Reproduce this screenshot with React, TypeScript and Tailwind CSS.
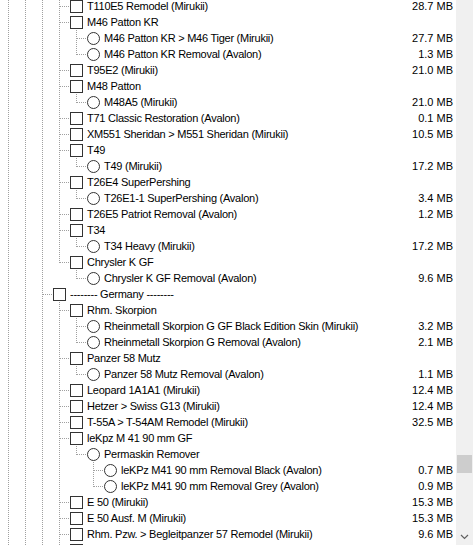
import React from "react";

type Row = { level: number; kind: "check" | "radio"; label: string; size?: string };

const rows: Row[] = [
  { level: 4, kind: "check", label: "T110E5 Remodel (Mirukii)", size: "28.7 MB" },
  { level: 4, kind: "check", label: "M46 Patton KR" },
  { level: 5, kind: "radio", label: "M46 Patton KR > M46 Tiger (Mirukii)", size: "27.7 MB" },
  { level: 5, kind: "radio", label: "M46 Patton KR Removal (Avalon)", size: "1.3 MB" },
  { level: 4, kind: "check", label: "T95E2 (Mirukii)", size: "21.0 MB" },
  { level: 4, kind: "check", label: "M48 Patton" },
  { level: 5, kind: "radio", label: "M48A5 (Mirukii)", size: "21.0 MB" },
  { level: 4, kind: "check", label: "T71 Classic Restoration (Avalon)", size: "0.1 MB" },
  { level: 4, kind: "check", label: "XM551 Sheridan > M551 Sheridan (Mirukii)", size: "10.5 MB" },
  { level: 4, kind: "check", label: "T49" },
  { level: 5, kind: "radio", label: "T49 (Mirukii)", size: "17.2 MB" },
  { level: 4, kind: "check", label: "T26E4 SuperPershing" },
  { level: 5, kind: "radio", label: "T26E1-1 SuperPershing (Avalon)", size: "3.4 MB" },
  { level: 4, kind: "check", label: "T26E5 Patriot Removal (Avalon)", size: "1.2 MB" },
  { level: 4, kind: "check", label: "T34" },
  { level: 5, kind: "radio", label: "T34 Heavy (Mirukii)", size: "17.2 MB" },
  { level: 4, kind: "check", label: "Chrysler K GF" },
  { level: 5, kind: "radio", label: "Chrysler K GF Removal (Avalon)", size: "9.6 MB" },
  { level: 3, kind: "check", label: "-------- Germany --------" },
  { level: 4, kind: "check", label: "Rhm. Skorpion" },
  { level: 5, kind: "radio", label: "Rheinmetall Skorpion G GF Black Edition Skin (Mirukii)", size: "3.2 MB" },
  { level: 5, kind: "radio", label: "Rheinmetall Skorpion G Removal (Avalon)", size: "2.1 MB" },
  { level: 4, kind: "check", label: "Panzer 58 Mutz" },
  { level: 5, kind: "radio", label: "Panzer 58 Mutz Removal (Avalon)", size: "1.1 MB" },
  { level: 4, kind: "check", label: "Leopard 1A1A1 (Mirukii)", size: "12.4 MB" },
  { level: 4, kind: "check", label: "Hetzer > Swiss G13 (Mirukii)", size: "12.4 MB" },
  { level: 4, kind: "check", label: "T-55A > T-54AM Remodel (Mirukii)", size: "32.5 MB" },
  { level: 4, kind: "check", label: "leKpz M 41 90 mm GF" },
  { level: 5, kind: "radio", label: "Permaskin Remover" },
  { level: 6, kind: "radio", label: "leKPz M41 90 mm Removal Black (Avalon)", size: "0.7 MB" },
  { level: 6, kind: "radio", label: "leKPz M41 90 mm Removal Grey (Avalon)", size: "0.9 MB" },
  { level: 4, kind: "check", label: "E 50 (Mirukii)", size: "15.3 MB" },
  { level: 4, kind: "check", label: "E 50 Ausf. M (Mirukii)", size: "15.3 MB" },
  { level: 4, kind: "check", label: "Rhm. Pzw. > Begleitpanzer 57 Remodel (Mirukii)", size: "9.6 MB" },
  { level: 4, kind: "check", label: "Kampfpanzer 70 (Mirukii)", size: "11.8 MB" },
  // below the fold, only here so the guide lines keep running
  { level: 3, kind: "check", label: "-------- Japan --------" },
  { level: 2, kind: "check", label: "Misc" },
  { level: 1, kind: "check", label: "Other" },
];

// does a later row sit at `level` before anything shallower shows up
function continues(from: number, level: number) {
  for (let j = from + 1; j < rows.length; j++) {
    if (rows[j].level < level) return false;
    if (rows[j].level === level) return true;
  }
  return false;
}

const DOT = "#a0a0a0";

function Guide({ on }: { on: boolean }) {
  return (
    <svg width="17" height="16" className="shrink-0" shapeRendering="crispEdges">
      {on && <line x1={6.5} y1={0} x2={6.5} y2={16} stroke={DOT} strokeDasharray="1 1" />}
    </svg>
  );
}

function Elbow({ last }: { last: boolean }) {
  return (
    <svg width="17" height="16" className="shrink-0" shapeRendering="crispEdges">
      <line x1={6.5} y1={0} x2={6.5} y2={last ? 9 : 16} stroke={DOT} strokeDasharray="1 1" />
      <line x1={7} y1={8.5} x2={17} y2={8.5} stroke={DOT} strokeDasharray="1 1" />
    </svg>
  );
}

function TreeRow({ row, index }: { row: Row; index: number }) {
  const guides = [];
  for (let k = 0; k < row.level - 1; k++) {
    guides.push(<Guide key={k} on={continues(index, k + 1)} />);
  }
  return (
    <div className="flex h-[16px] items-center pl-[2px] pr-[3px]">
      {guides}
      <Elbow last={!continues(index, row.level)} />
      {row.kind === "check" ? (
        <div className="h-[13px] w-[13px] shrink-0 border border-[#333333] bg-white" />
      ) : (
        <div className="h-[13px] w-[13px] shrink-0 rounded-full border border-[#333333] bg-white" />
      )}
      <span className="whitespace-nowrap pl-[4px] tracking-[-0.25px] text-black">{row.label}</span>
      <span className="flex-1" />
      {row.size && <span className="whitespace-nowrap text-black">{row.size}</span>}
    </div>
  );
}

export default function App() {
  return (
    <div className="flex h-[545px] w-[473px] overflow-hidden bg-white font-['Liberation_Sans',Arial,sans-serif] text-[11px] leading-[16px]">
      <div className="min-w-0 flex-1 overflow-hidden">
        <div className="mt-[-2px]">
          {rows.map((row, i) => (
            <TreeRow key={i} row={row} index={i} />
          ))}
        </div>
      </div>

      {/* vertical scrollbar */}
      <div className="flex w-[17px] shrink-0 flex-col bg-[#f0f0f0]">
        <div className="h-[455px]" />
        <div className="mx-[1px] h-[18px] bg-[#cdcdcd]" />
        <div className="flex-1" />
        <div className="flex h-[17px] items-center justify-center">
          <svg width="9" height="6" viewBox="0 0 9 6">
            <path d="M1 1 L4.5 4.5 L8 1" fill="none" stroke="#606060" strokeWidth="1.2" />
          </svg>
        </div>
      </div>
    </div>
  );
}
